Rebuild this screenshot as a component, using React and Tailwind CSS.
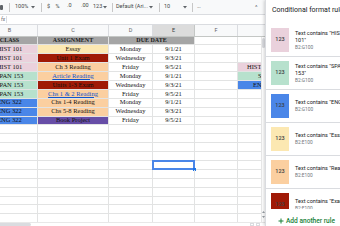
import React from "react";

const rows = [
  { cls: "HIST 101", cb: "bg-[#ead1dc]", a: "Essay", ab: "bg-[#fce8b2]", link: false, d: "Monday", e: "9/1/21" },
  { cls: "HIST 101", cb: "bg-[#ead1dc]", a: "Unit 1 Exam", ab: "bg-[#a01a06]", link: false, d: "Wednesday", e: "9/3/21" },
  { cls: "HIST 101", cb: "bg-[#ead1dc]", a: "Ch 3 Reading", ab: "bg-[#fbcfa0]", link: false, d: "Friday", e: "9/5/21", g: { bg: "bg-[#ead1dc]", t: "HIST 101", pl: "pl-[9px]" } },
  { cls: "SPAN 153", cb: "bg-[#b7e1cd]", a: "Article Reading", ab: "bg-[#fbcfa0]", link: true, d: "Monday", e: "9/1/21", g: { bg: "bg-[#b7e1cd]", t: "SPAN 153", pl: "pl-[20px]" } },
  { cls: "SPAN 153", cb: "bg-[#b7e1cd]", a: "Units 1-3 Exam", ab: "bg-[#a01a06]", link: false, d: "Wednesday", e: "9/3/21", g: { bg: "bg-[#4a86e8]", t: "ENG 322", pl: "pl-[15px]" } },
  { cls: "SPAN 153", cb: "bg-[#b7e1cd]", a: "Chs 1 & 2 Reading", ab: "bg-[#fbcfa0]", link: true, d: "Friday", e: "9/5/21" },
  { cls: "ENG 322", cb: "bg-[#4a86e8]", a: "Chs 1-4 Reading", ab: "bg-[#fbcfa0]", link: false, d: "Monday", e: "9/1/21" },
  { cls: "ENG 322", cb: "bg-[#4a86e8]", a: "Chs 5-8 Reading", ab: "bg-[#fbcfa0]", link: false, d: "Wednesday", e: "9/3/21" },
  { cls: "ENG 322", cb: "bg-[#4a86e8]", a: "Book Project", ab: "bg-[#674ea7]", link: false, d: "Friday", e: "9/5/21" },
];

const rules = [
  { bg: "bg-[#ead1dc]", l1: 'Text contains "HIST', l2: '101"', r: "B2:G100" },
  { bg: "bg-[#b7e1cd]", l1: 'Text contains "SPAN', l2: '153"', r: "B2:G100" },
  { bg: "bg-[#4a86e8]", l1: 'Text contains "ENG 322"', r: "B2:G100" },
  { bg: "bg-[#fce8b2]", l1: 'Text contains "Essay"', r: "B2:E100" },
  { bg: "bg-[#fbcfa0]", l1: 'Text contains "Reading"', r: "B2:E100" },
  { bg: "bg-[#a01a06]", l1: 'Text contains "Exam"', r: "B2:E100" },
];

const cellBase = "shrink-0 h-full border-r border-b border-[#e2e3e3] flex items-center justify-center overflow-hidden whitespace-nowrap";

function Caret() {
  return (
    <svg width="4" height="3" viewBox="0 0 4 3" className="shrink-0">
      <path d="M0 0 L4 0 L2 2.5 Z" fill="#5f6368" />
    </svg>
  );
}

function Sep() {
  return <div className="w-px h-[9px] bg-[#c7c7c7]" />;
}

function EmptyRow({ selected }) {
  return (
    <div className="flex h-[8.9px] shrink-0">
      <div className={`${cellBase} w-[38px]`} />
      <div className={`${cellBase} w-[71px]`} />
      <div className={`${cellBase} w-[44px]`} />
      <div className={`${cellBase} w-[42px] relative overflow-visible`}>
        {selected && (
          <>
            <div className="absolute -left-[1px] -top-[1px] w-[43px] h-[9.9px] border-2 border-[#4a86e8]" />
            <div className="absolute -right-[2px] -bottom-[2px] w-[3px] h-[3px] bg-[#1a73e8]" />
          </>
        )}
      </div>
      <div className={`${cellBase} w-[43px]`} />
      <div className={`${cellBase} w-[23px] border-r-0`} />
    </div>
  );
}

export default function App() {
  return (
    <div className="w-[340px] h-[226px] overflow-hidden flex bg-white" style={{ fontFamily: "Roboto, 'Liberation Sans', sans-serif" }}>
      {/* Sheet */}
      <div className="w-[265px] shrink-0 h-full flex flex-col">
        {/* Toolbar */}
        <div className="h-[15px] shrink-0 bg-[#f8f9fa] border-b border-[#dadce0] flex items-center text-[5.5px] text-[#444746] leading-none whitespace-nowrap">
          <div className="w-[6px] flex items-center">
            <div className="w-[3px] h-[5px] bg-[#5f6368] rounded-[1px]" />
          </div>
          <div className="w-[6px] flex justify-center"><Sep /></div>
          <div className="w-[19px] pl-[3px]">100%</div>
          <div className="w-[7px] flex items-center"><Caret /></div>
          <div className="w-[6px] flex justify-center"><Sep /></div>
          <div className="w-[9px] text-center">$</div>
          <div className="w-[9px] text-center">%</div>
          <div className="w-[14px] pl-[5px] flex flex-col items-start">
            <span>.0</span>
            <span className="text-[3px] leading-[3px] pl-[2px]">←</span>
          </div>
          <div className="w-[14px] pl-[5px] flex flex-col items-start">
            <span>.00</span>
            <span className="text-[3px] leading-[3px] pl-[3px]">→</span>
          </div>
          <div className="w-[20px] pl-[3px] flex items-center gap-[1px]">
            <span>123</span>
            <Caret />
          </div>
          <div className="w-[4px] flex justify-center"><Sep /></div>
          <div className="w-[42px] pl-[2px] flex items-center">
            <span className="w-[33px]">Default (Ari...</span>
            <Caret />
          </div>
          <div className="w-[6px] flex justify-center"><Sep /></div>
          <div className="w-[26px] pl-[2px] flex items-center">
            <span className="w-[19px]">10</span>
            <Caret />
          </div>
          <div className="w-[9px] flex justify-center"><Sep /></div>
          <div className="w-[8px] text-[6px] tracking-[-0.5px]">···</div>
          <div className="flex-1" />
          <div className="w-[10px] text-[6px] text-[#5f6368]">^</div>
        </div>
        {/* Formula bar */}
        <div className="h-[10px] shrink-0 bg-white border-b border-[#dadce0] flex items-center text-[5px] text-[#5f6368]">
          <div className="w-[6px] italic pl-[1px] leading-none">fx</div>
          <div className="w-px h-[7px] bg-[#dadce0]" />
        </div>
        {/* Column headers */}
        <div className="h-[11.5px] shrink-0 flex bg-[#f8f9fa] border-b border-[#c4c7c5] text-[5.5px] text-[#5f6368] leading-none">
          <div className="w-[38px] shrink-0 overflow-hidden border-r border-[#dadce0] flex items-center">
            <div className="w-[57px] -ml-[19px] shrink-0 text-center">B</div>
          </div>
          <div className="w-[71px] shrink-0 border-r border-[#dadce0] flex items-center justify-center">C</div>
          <div className="w-[44px] shrink-0 border-r border-[#dadce0] flex items-center justify-center">D</div>
          <div className="w-[42px] shrink-0 border-r border-[#c4c7c5] bg-[#dcdcdc] flex items-center justify-center text-[#3c4043]">E</div>
          <div className="w-[43px] shrink-0 border-r border-[#dadce0] flex items-center justify-center">F</div>
          <div className="w-[23px] shrink-0" />
        </div>
        {/* Grid + vertical scrollbar */}
        <div className="flex-1 flex min-h-0">
          <div className="w-[261px] shrink-0 flex flex-col overflow-hidden text-[6.5px] text-[#111] leading-none" style={{ fontFamily: "'Liberation Serif', 'DejaVu Serif', serif" }}>
            {/* header row */}
            <div className="flex h-[8.9px] shrink-0 font-bold text-[6px] text-[#1a1a1a]">
              <div className={`${cellBase} w-[38px] bg-[#a5a5a5] border-[#999] justify-start`}>
                <div className="w-[57px] -ml-[19px] shrink-0 text-center">CLASS</div>
              </div>
              <div className={`${cellBase} w-[71px] bg-[#a5a5a5] border-[#999]`}>ASSIGNMENT</div>
              <div className={`${cellBase} w-[86px] bg-[#a5a5a5] border-[#999]`}>DUE DATE</div>
              <div className={`${cellBase} w-[43px]`} />
              <div className={`${cellBase} w-[23px] border-r-0`} />
            </div>
            {rows.map((r, i) => (
              <div key={i} className="flex h-[8.9px] shrink-0">
                <div className={`${cellBase} w-[38px] ${r.cb} justify-start`}>
                  <div className="w-[57px] -ml-[19px] shrink-0 text-center">{r.cls}</div>
                </div>
                <div className={`${cellBase} w-[71px] ${r.ab}`}>
                  {r.link ? <span className="text-[#1155cc] underline">{r.a}</span> : r.a}
                </div>
                <div className={`${cellBase} w-[44px]`}>{r.d}</div>
                <div className={`${cellBase} w-[42px]`}>{r.e}</div>
                <div className={`${cellBase} w-[43px]`} />
                {r.g ? (
                  <div className={`${cellBase} w-[23px] border-r-0 justify-start ${r.g.bg} ${r.g.pl}`}>{r.g.t}</div>
                ) : (
                  <div className={`${cellBase} w-[23px] border-r-0`} />
                )}
              </div>
            ))}
            {Array.from({ length: 11 }).map((_, i) => (
              <EmptyRow key={i} selected={i === 4} />
            ))}
          </div>
          <div className="w-[4px] shrink-0 bg-white border-l border-[#e8e8e8] flex flex-col items-center pt-[1px]">
            <div className="w-[3px] h-[10px] bg-[#dadce0] rounded-full" />
            <div className="flex-1" />
            <svg width="3" height="9" viewBox="0 0 3 9" className="mb-[3px]">
              <path d="M0 3 L3 3 L1.5 1 Z" fill="#9aa0a6" />
              <path d="M0 6 L3 6 L1.5 8 Z" fill="#9aa0a6" />
            </svg>
          </div>
        </div>
        {/* Horizontal scrollbar */}
        <div className="h-[4px] shrink-0 flex items-center bg-white border-t border-[#e8e8e8]">
          <div className="w-[31px] h-[3px] bg-[#dadce0] rounded-r-full" />
          <div className="flex-1" />
          <div className="w-[4px] h-[3px] border border-[#dadce0] mr-[2px]" />
          <div className="w-[4px] h-[3px] border border-[#dadce0] mr-[5px]" />
        </div>
      </div>

      {/* Side panel */}
      <div className="w-[75px] shrink-0 h-full bg-white flex flex-col overflow-hidden relative shadow-[-1px_0_3px_rgba(0,0,0,0.18)] border-l border-[#dadce0]">
        <div className="h-[24px] shrink-0 pl-[6px] pt-[6px] text-[7px] leading-[8px] text-[#202124] whitespace-nowrap">
          Conditional format rules
        </div>
        <div className="flex-1 min-h-0 overflow-hidden">
          {rules.map((r, i) => (
            <div key={i} className="h-[33px] border-b border-[#dadce0] flex items-center pl-[5px] gap-[6px] whitespace-nowrap">
              <div className={`w-[18px] h-[24px] shrink-0 ${r.bg} flex items-center justify-center text-[5.5px] font-medium text-[#3c4043] leading-none`}>123</div>
              <div className="flex flex-col text-[5.5px] leading-[7px] text-[#202124]">
                <span>{r.l1}</span>
                {r.l2 && <span>{r.l2}</span>}
                <span className="text-[4.8px] text-[#70757a]">{r.r}</span>
              </div>
            </div>
          ))}
        </div>
        <div className="h-[17px] shrink-0 bg-white pt-[8px] pl-[12px] flex items-start gap-[2px] text-[6.6px] leading-[8px] text-[#188038] font-medium whitespace-nowrap">
          <svg width="6" height="8" viewBox="0 0 6 8" className="shrink-0">
            <path d="M3 1.5 V6.5 M0.5 4 H5.5" stroke="#188038" strokeWidth="1" />
          </svg>
          <span>Add another rule</span>
        </div>
      </div>
    </div>
  );
}
